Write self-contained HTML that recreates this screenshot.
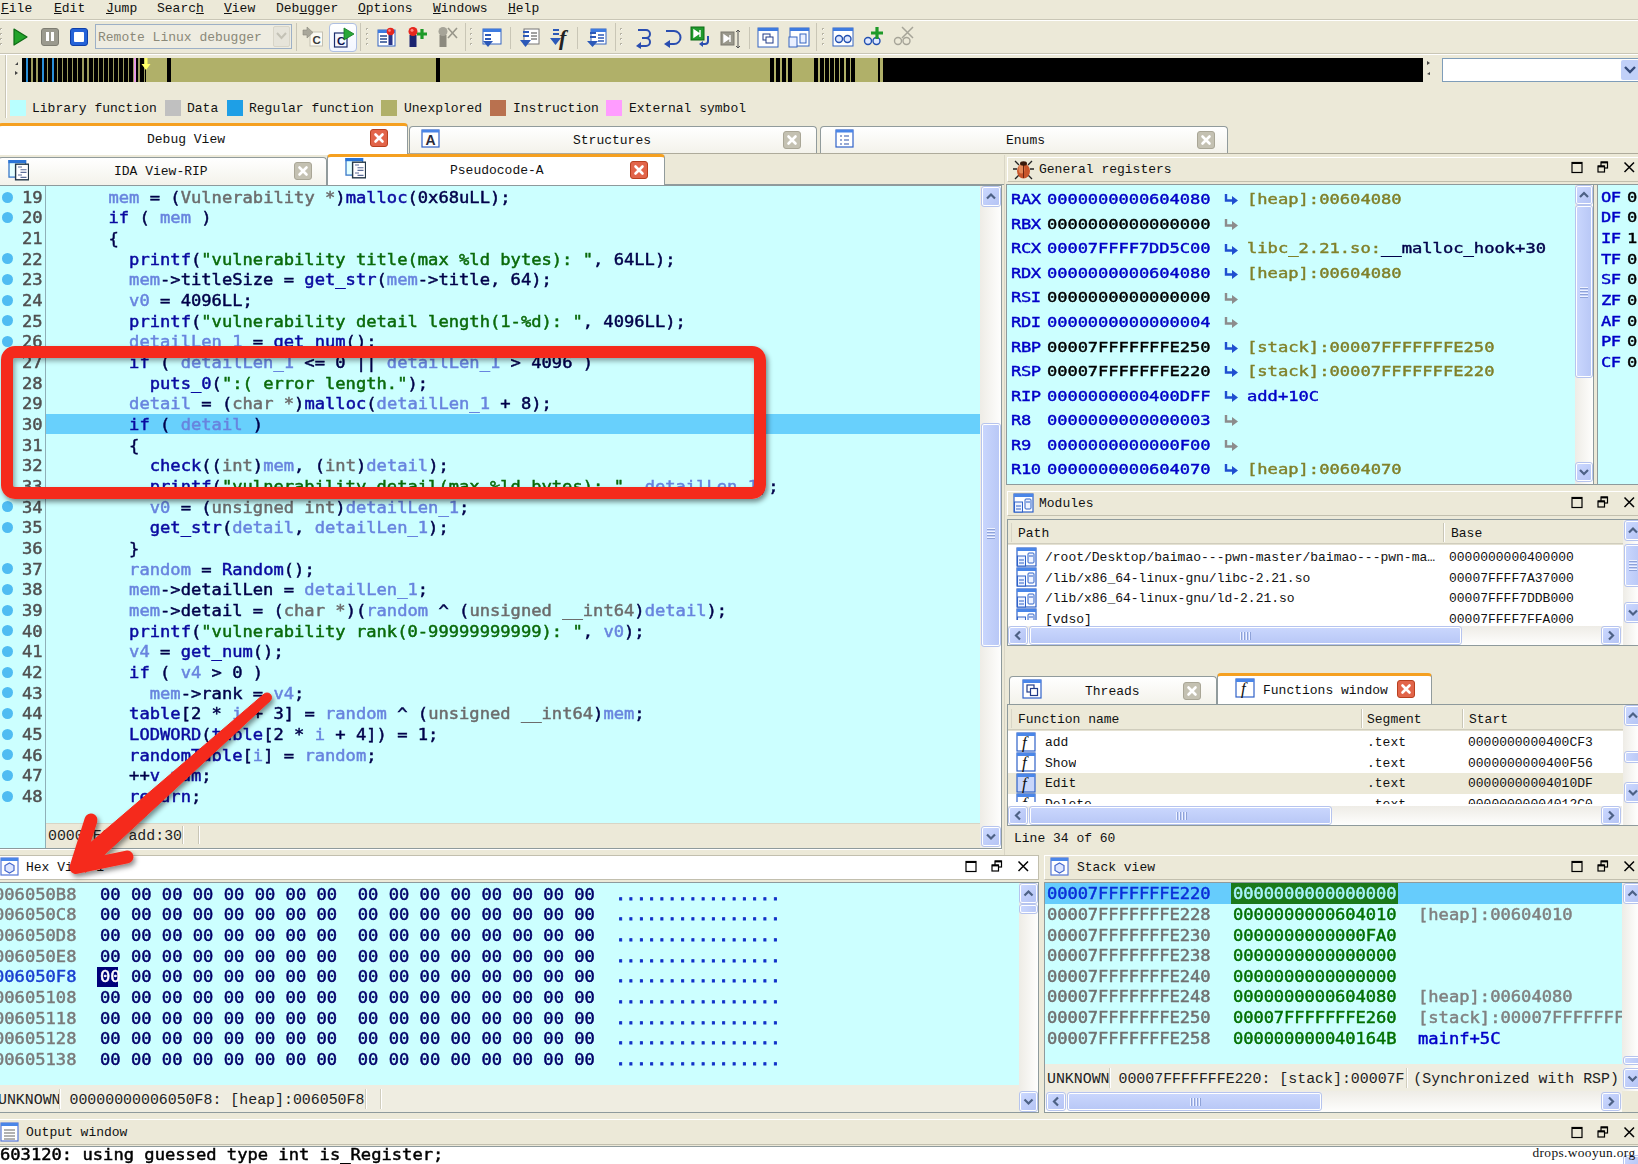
<!DOCTYPE html>
<html><head><meta charset="utf-8"><title>IDA</title>
<style>
html,body{margin:0;padding:0}
body{width:1638px;height:1164px;overflow:hidden;background:#ece9d8;position:relative;font-family:"Liberation Mono",monospace;font-size:13px;color:#000}
div,svg{position:absolute;box-sizing:border-box}
.t{white-space:pre;line-height:16px;height:16px;color:#111;margin-top:1px}
.st{white-space:pre;line-height:18px;height:18px;font-size:14.9px;color:#222;margin-top:1px}
.c{white-space:pre;font-family:"DejaVu Sans Mono","Liberation Mono",monospace;font-size:17.14px;line-height:20px;height:20px;-webkit-text-stroke:0.5px;color:#00006a;transform:scaleY(.93);transform-origin:0 50%;margin-top:-.2px}
.k{color:#0a0aa0}.v{color:#6884de}.s{color:#0a6a0a}.g{color:#6c6c6c}.n{color:#00004a}.b{color:#0000c8}.o{color:#80802a}.gr{color:#808080}.gn{color:#007000}
.tab{border:1px solid #919b9c;border-bottom:none;border-radius:4px 4px 0 0;background:linear-gradient(#fff,#f3f2ea)}
.taba{border:1px solid #919b9c;border-bottom:none;border-top:3px solid #f5a020;border-radius:4px 4px 0 0;background:#fff}
.xg{width:18px;height:18px;border-radius:3px;background:#c4c1b2;border:1px solid #a9a696}
.xr{width:18px;height:18px;border-radius:3px;background:#e2654a;border:1px solid #b8401f}
.sbv{background:linear-gradient(90deg,#f3f1ec,#fdfdfb)}
.sbh{background:linear-gradient(#f3f1ec,#fdfdfb)}
.thv{background:linear-gradient(90deg,#c9d6fd,#b9c8f6);border:1px solid #fff;border-radius:2px;outline:1px solid #b6c4ee}
.thh{background:linear-gradient(#c9d6fd,#b9c8f6);border:1px solid #fff;border-radius:2px;outline:1px solid #b6c4ee}
.ab{background:linear-gradient(135deg,#cbd8ff,#b5c4f4);border:1px solid #fff;border-radius:2px;outline:1px solid #b6c4ee}
</style></head><body>
<div class="t" style="left:1px;top:0px;"><u>F</u>ile</div>
<div class="t" style="left:54px;top:0px;"><u>E</u>dit</div>
<div class="t" style="left:106px;top:0px;"><u>J</u>ump</div>
<div class="t" style="left:157px;top:0px;">Searc<u>h</u></div>
<div class="t" style="left:224px;top:0px;"><u>V</u>iew</div>
<div class="t" style="left:276px;top:0px;">Deb<u>u</u>gger</div>
<div class="t" style="left:358px;top:0px;"><u>O</u>ptions</div>
<div class="t" style="left:433px;top:0px;"><u>W</u>indows</div>
<div class="t" style="left:508px;top:0px;"><u>H</u>elp</div>
<div style="left:0px;top:19px;width:1638px;height:1px;background:#c9c6b6;"></div>
<div style="left:0px;top:20px;width:1638px;height:1px;background:#fff;"></div>
<div style="left:0px;top:53px;width:1638px;height:1px;background:#c9c6b6;"></div>
<div style="left:0px;top:54px;width:1638px;height:1px;background:#fff;"></div>
<svg style="left:10px;top:26px" width="22" height="22" viewBox="0 0 22 22"><path d="M4 3 L17 11 L4 19 Z" fill="#22a32a" stroke="#0d6b14" stroke-width="1.2" stroke-linejoin="round"/></svg>
<div style="left:41px;top:28px;width:18px;height:18px;border-radius:3px;background:#9b9a8e;border:1px solid #7e7d72"></div><div style="left:46px;top:32px;width:3px;height:9px;background:#fff;"></div>
<div style="left:51px;top:32px;width:3px;height:9px;background:#fff;"></div>
<div style="left:70px;top:28px;width:18px;height:18px;border-radius:3px;background:#2563d8;border:1px solid #0f3fa8"></div><div style="left:74px;top:32px;width:10px;height:10px;background:#fff;border-radius:1px"></div>
<div style="left:95px;top:24px;width:197px;height:25px;border:1px solid #9db0c6;background:#eeece1"></div>
<div class="t" style="left:98px;top:29px;color:#8a8878">Remote Linux debugger</div>
<div style="left:273px;top:26px;width:17px;height:21px;background:#e6e4da;border:1px solid #d8d5c8;border-radius:2px"></div><svg style="left:275px;top:31px" width="13" height="10" viewBox="0 0 13 10"><path d="M2 2 L6.5 7 L11 2" fill="none" stroke="#c4c2b6" stroke-width="2"/></svg>
<div style="left:296px;top:23px;width:1px;height:28px;background:#c9c6b6;"></div>
<svg style="left:302px;top:26px" width="22" height="22" viewBox="0 0 22 22"><rect x="8" y="6" width="12.5" height="14" fill="#fbfaf4" stroke="#c4c1b2"/><text x="10.500" y="18" font-family="Liberation Sans" font-weight="bold" font-size="11.5" fill="#3a3a3a">C</text><path d="M1 4h4v-3l6 5.500l-6 5.500v-3h-4z" fill="#a9a79a" stroke="#8a887c" stroke-width=".6"/></svg>
<div style="left:329px;top:23px;width:28px;height:29px;border:1px solid #aebfe2;border-radius:4px;background:linear-gradient(#fff,#f2f6ff)"></div><svg style="left:333px;top:26px" width="24" height="24" viewBox="0 0 24 24"><rect x="1.500" y="7" width="12.5" height="14" fill="#f4f7ff" stroke="#1c2c6c" stroke-width="1.2"/><text x="4" y="19" font-family="Liberation Sans" font-weight="bold" font-size="11.5" fill="#0c1450">C</text><path d="M11 2 L21 8 L11 14 Z" fill="#2aa838" stroke="#127a20" stroke-width=".8"/></svg>
<div style="left:360px;top:23px;width:1px;height:28px;background:#c9c6b6;"></div>
<div style="left:0px;top:28px;width:2px;height:2px;background:#b8b5a5;"></div>
<div style="left:1px;top:29px;width:1px;height:1px;background:#fff;"></div>
<div style="left:0px;top:33px;width:2px;height:2px;background:#b8b5a5;"></div>
<div style="left:1px;top:34px;width:1px;height:1px;background:#fff;"></div>
<div style="left:0px;top:38px;width:2px;height:2px;background:#b8b5a5;"></div>
<div style="left:1px;top:39px;width:1px;height:1px;background:#fff;"></div>
<div style="left:0px;top:43px;width:2px;height:2px;background:#b8b5a5;"></div>
<div style="left:1px;top:44px;width:1px;height:1px;background:#fff;"></div>
<div style="left:366px;top:28px;width:2px;height:2px;background:#b8b5a5;"></div>
<div style="left:367px;top:29px;width:1px;height:1px;background:#fff;"></div>
<div style="left:366px;top:33px;width:2px;height:2px;background:#b8b5a5;"></div>
<div style="left:367px;top:34px;width:1px;height:1px;background:#fff;"></div>
<div style="left:366px;top:38px;width:2px;height:2px;background:#b8b5a5;"></div>
<div style="left:367px;top:39px;width:1px;height:1px;background:#fff;"></div>
<div style="left:366px;top:43px;width:2px;height:2px;background:#b8b5a5;"></div>
<div style="left:367px;top:44px;width:1px;height:1px;background:#fff;"></div>
<svg style="left:376px;top:26px" width="22" height="22" viewBox="0 0 22 22"><rect x="2" y="4" width="17" height="16" fill="#fff" stroke="#3565c0"/><rect x="2" y="4" width="17" height="3" fill="#3e7be0"/><path d="M4 10h7M4 13h7M4 16h7" stroke="#26488e" stroke-width="1.4"/><rect x="12.5" y="8" width="4" height="11" fill="#27358a"/><circle cx="14.5" cy="5.500" r="3.800" fill="#e6261e"/><circle cx="13.500" cy="4.500" r="1.300" fill="#ff8a80"/></svg>
<svg style="left:406px;top:26px" width="22" height="22" viewBox="0 0 22 22"><rect x="3.500" y="9" width="7" height="12" fill="#1c2470"/><circle cx="7" cy="5.500" r="4.500" fill="#e6261e"/><circle cx="6" cy="4.200" r="1.500" fill="#ff8a80"/><path d="M11 8h10M16 3v10" stroke="#1e9a28" stroke-width="3.2"/></svg>
<svg style="left:436px;top:26px" width="22" height="22" viewBox="0 0 22 22"><rect x="3.500" y="9" width="7" height="12" fill="#8c8a7e"/><circle cx="7" cy="5.500" r="4.500" fill="#a6a498"/><path d="M12 2l9 10M21 2l-9 10" stroke="#98968a" stroke-width="1.6"/></svg>
<div style="left:465px;top:23px;width:1px;height:28px;background:#c9c6b6;"></div>
<div style="left:470px;top:28px;width:2px;height:2px;background:#b8b5a5;"></div>
<div style="left:471px;top:29px;width:1px;height:1px;background:#fff;"></div>
<div style="left:470px;top:33px;width:2px;height:2px;background:#b8b5a5;"></div>
<div style="left:471px;top:34px;width:1px;height:1px;background:#fff;"></div>
<div style="left:470px;top:38px;width:2px;height:2px;background:#b8b5a5;"></div>
<div style="left:471px;top:39px;width:1px;height:1px;background:#fff;"></div>
<div style="left:470px;top:43px;width:2px;height:2px;background:#b8b5a5;"></div>
<div style="left:471px;top:44px;width:1px;height:1px;background:#fff;"></div>
<svg style="left:480px;top:26px" width="24" height="24" viewBox="0 0 24 24"><rect x="3" y="3" width="18" height="15" fill="#fff" stroke="#3565c0"/><rect x="3" y="3" width="18" height="3" fill="#3e7be0"/><path d="M5 9h6M5 13h6" stroke="#2c59b8" stroke-width="2.2"/><path d="M3 15h10l-5 6z" fill="#2c59b8"/></svg>
<div style="left:510px;top:27px;width:1px;height:22px;background:#c9c6b6;"></div>
<svg style="left:518px;top:26px" width="24" height="24" viewBox="0 0 24 24"><rect x="6" y="3" width="15" height="15" fill="#fff" stroke="#777"/><path d="M13 7h6M13 10h6M13 13h6" stroke="#444" stroke-width="1.2"/><path d="M5 6h6M5 10h6" stroke="#2c59b8" stroke-width="2.2"/><path d="M2 14h11l-5.5 7z" fill="#2c59b8"/></svg>
<svg style="left:548px;top:26px" width="24" height="24" viewBox="0 0 24 24"><path d="M5 4h6M5 8h6" stroke="#2c59b8" stroke-width="2.2"/><path d="M2 12h11l-5.5 7z" fill="#2c59b8"/><text x="11" y="19" font-family="Liberation Serif" font-style="italic" font-weight="bold" font-size="22" fill="#222">f</text></svg>
<div style="left:577px;top:27px;width:1px;height:22px;background:#c9c6b6;"></div>
<svg style="left:585px;top:26px" width="24" height="24" viewBox="0 0 24 24"><rect x="6" y="3" width="15" height="15" fill="#fff" stroke="#3565c0"/><rect x="6" y="3" width="15" height="3" fill="#3e7be0"/><path d="M5 7h6M5 11h6" stroke="#2c59b8" stroke-width="2.2"/><path d="M13 9h6M13 12h6M13 15h6" stroke="#2c59b8" stroke-width="1.6"/><path d="M2 15h11l-5.5 6z" fill="#2c59b8"/></svg>
<div style="left:615px;top:23px;width:1px;height:28px;background:#c9c6b6;"></div>
<div style="left:620px;top:28px;width:2px;height:2px;background:#b8b5a5;"></div>
<div style="left:621px;top:29px;width:1px;height:1px;background:#fff;"></div>
<div style="left:620px;top:33px;width:2px;height:2px;background:#b8b5a5;"></div>
<div style="left:621px;top:34px;width:1px;height:1px;background:#fff;"></div>
<div style="left:620px;top:38px;width:2px;height:2px;background:#b8b5a5;"></div>
<div style="left:621px;top:39px;width:1px;height:1px;background:#fff;"></div>
<div style="left:620px;top:43px;width:2px;height:2px;background:#b8b5a5;"></div>
<div style="left:621px;top:44px;width:1px;height:1px;background:#fff;"></div>
<svg style="left:633px;top:26px" width="22" height="24" viewBox="0 0 22 24"><path d="M5 4h8a4 4 0 0 1 0 8h-4M13 12a4 4 0 0 1 0 8h-8" fill="none" stroke="#2a4db0" stroke-width="2"/><path d="M8 16l-5 4l5 3z" fill="#2a4db0"/></svg>
<svg style="left:661px;top:26px" width="22" height="24" viewBox="0 0 22 24"><path d="M5 5h8a6 6 0 0 1 0 13h-6" fill="none" stroke="#2a4db0" stroke-width="2"/><path d="M9 14l-6 4l6 4z" fill="#2a4db0"/></svg>
<svg style="left:690px;top:26px" width="24" height="24" viewBox="0 0 24 24"><rect x="1" y="1" width="13" height="13" fill="#1f9a2c" stroke="#0d6b14"/><path d="M4 4l5 3.5l-5 3.5zM10 4v7" fill="#fff" stroke="#fff" stroke-width="1.4"/><path d="M18 10v5a3 3 0 0 1-3 3h-3" fill="none" stroke="#2a4db0" stroke-width="2"/><path d="M13 15l-4 3l4 3z" fill="#2a4db0"/></svg>
<svg style="left:720px;top:28px" width="24" height="24" viewBox="0 0 24 24"><rect x="1" y="4" width="13" height="13" fill="#9a988c" stroke="#7b796e"/><path d="M4 7l5 3.5l-5 3.5zM10 7v7" fill="#fff" stroke="#fff" stroke-width="1.4"/><path d="M18 2v18M16 4l2-2l2 2M16 18l2 2l2-2" fill="none" stroke="#555" stroke-width="1"/></svg>
<div style="left:749px;top:27px;width:1px;height:22px;background:#c9c6b6;"></div>
<svg style="left:757px;top:26px" width="24" height="24" viewBox="0 0 24 24"><rect x="1" y="2" width="20" height="19" fill="#fff" stroke="#3565c0"/><rect x="1" y="2" width="20" height="3" fill="#3e7be0"/><rect x="6" y="8" width="7" height="6" fill="#fff" stroke="#223c88"/><rect x="9" y="11" width="7" height="6" fill="#fff" stroke="#223c88"/></svg>
<svg style="left:787px;top:26px" width="24" height="24" viewBox="0 0 24 24"><rect x="3" y="2" width="19" height="18" fill="#fff" stroke="#3565c0"/><rect x="3" y="2" width="19" height="3" fill="#3e7be0"/><rect x="2" y="11" width="8" height="10" fill="#eaf0ff" stroke="#3565c0"/><rect x="13" y="8" width="6" height="9" fill="#eaf0ff" stroke="#3565c0"/></svg>
<div style="left:816px;top:23px;width:1px;height:28px;background:#c9c6b6;"></div>
<div style="left:822px;top:28px;width:2px;height:2px;background:#b8b5a5;"></div>
<div style="left:823px;top:29px;width:1px;height:1px;background:#fff;"></div>
<div style="left:822px;top:33px;width:2px;height:2px;background:#b8b5a5;"></div>
<div style="left:823px;top:34px;width:1px;height:1px;background:#fff;"></div>
<div style="left:822px;top:38px;width:2px;height:2px;background:#b8b5a5;"></div>
<div style="left:823px;top:39px;width:1px;height:1px;background:#fff;"></div>
<div style="left:822px;top:43px;width:2px;height:2px;background:#b8b5a5;"></div>
<div style="left:823px;top:44px;width:1px;height:1px;background:#fff;"></div>
<svg style="left:832px;top:26px" width="24" height="24" viewBox="0 0 24 24"><rect x="1" y="2" width="20" height="18" fill="#fff" stroke="#3565c0"/><rect x="1" y="2" width="20" height="3" fill="#3e7be0"/><circle cx="7" cy="13" r="3.5" fill="#dfe8ff" stroke="#2350b0" stroke-width="1.4"/><circle cx="15.5" cy="13" r="3.5" fill="#dfe8ff" stroke="#2350b0" stroke-width="1.4"/></svg>
<svg style="left:862px;top:26px" width="24" height="24" viewBox="0 0 24 24"><circle cx="6" cy="15" r="3.5" fill="#dfe8ff" stroke="#2350b0" stroke-width="1.4"/><circle cx="14.5" cy="15" r="3.5" fill="#dfe8ff" stroke="#2350b0" stroke-width="1.4"/><path d="M9 7h12M15 1v12" stroke="#1e9a28" stroke-width="3.2"/></svg>
<svg style="left:892px;top:26px" width="24" height="24" viewBox="0 0 24 24"><circle cx="6" cy="15" r="3.5" fill="none" stroke="#a6a498" stroke-width="1.4"/><circle cx="14.5" cy="15" r="3.5" fill="none" stroke="#a6a498" stroke-width="1.4"/><path d="M10 1l11 11M21 1l-11 11" stroke="#a6a498" stroke-width="1.5"/></svg>
<div style="left:5px;top:55px;width:1px;height:63px;background:#c9c6b6;"></div>
<div style="left:6px;top:55px;width:1px;height:63px;background:#fff;"></div>
<div style="left:22px;top:58px;width:1401px;height:24px;background:#b0b069;"></div>
<div style="left:22px;top:58px;width:124px;height:24px;background:#000;"></div>
<div style="left:31.3px;top:58px;width:1.3px;height:24px;background:#9c9c5e;"></div>
<div style="left:36.4px;top:58px;width:1.3px;height:24px;background:#9c9c5e;"></div>
<div style="left:41.5px;top:58px;width:1.3px;height:24px;background:#9c9c5e;"></div>
<div style="left:46.6px;top:58px;width:1.3px;height:24px;background:#9c9c5e;"></div>
<div style="left:51.7px;top:58px;width:1.3px;height:24px;background:#9c9c5e;"></div>
<div style="left:56.8px;top:58px;width:1.3px;height:24px;background:#9c9c5e;"></div>
<div style="left:61.9px;top:58px;width:1.3px;height:24px;background:#9c9c5e;"></div>
<div style="left:67.0px;top:58px;width:1.3px;height:24px;background:#9c9c5e;"></div>
<div style="left:72.1px;top:58px;width:1.3px;height:24px;background:#9c9c5e;"></div>
<div style="left:77.2px;top:58px;width:1.3px;height:24px;background:#9c9c5e;"></div>
<div style="left:82.3px;top:58px;width:1.3px;height:24px;background:#9c9c5e;"></div>
<div style="left:87.4px;top:58px;width:1.3px;height:24px;background:#9c9c5e;"></div>
<div style="left:92.5px;top:58px;width:1.3px;height:24px;background:#9c9c5e;"></div>
<div style="left:97.6px;top:58px;width:1.3px;height:24px;background:#9c9c5e;"></div>
<div style="left:102.7px;top:58px;width:1.3px;height:24px;background:#9c9c5e;"></div>
<div style="left:107.8px;top:58px;width:1.3px;height:24px;background:#9c9c5e;"></div>
<div style="left:112.9px;top:58px;width:1.3px;height:24px;background:#9c9c5e;"></div>
<div style="left:118.0px;top:58px;width:1.3px;height:24px;background:#9c9c5e;"></div>
<div style="left:123.1px;top:58px;width:1.3px;height:24px;background:#9c9c5e;"></div>
<div style="left:128.2px;top:58px;width:1.3px;height:24px;background:#9c9c5e;"></div>
<div style="left:133.3px;top:58px;width:1.3px;height:24px;background:#9c9c5e;"></div>
<div style="left:138.4px;top:58px;width:1.3px;height:24px;background:#9c9c5e;"></div>
<div style="left:143.5px;top:58px;width:1.3px;height:24px;background:#9c9c5e;"></div>
<div style="left:25.5px;top:58px;width:2.2px;height:24px;background:#2a8fd8;"></div>
<div style="left:41.5px;top:58px;width:2.2px;height:24px;background:#2a8fd8;"></div>
<div style="left:51.7px;top:58px;width:2.2px;height:24px;background:#2a8fd8;"></div>
<div style="left:134.3px;top:58px;width:1.8px;height:24px;background:#e79ae6;"></div>
<div style="left:167px;top:58px;width:4px;height:24px;background:#000;"></div>
<div style="left:436px;top:58px;width:4px;height:24px;background:#000;"></div>
<div style="left:770px;top:58px;width:4px;height:24px;background:#000;"></div>
<div style="left:776px;top:58px;width:4px;height:24px;background:#000;"></div>
<div style="left:782px;top:58px;width:4px;height:24px;background:#000;"></div>
<div style="left:788px;top:58px;width:4px;height:24px;background:#000;"></div>
<div style="left:814px;top:58px;width:4px;height:24px;background:#000;"></div>
<div style="left:820px;top:58px;width:4px;height:24px;background:#000;"></div>
<div style="left:825px;top:58px;width:4px;height:24px;background:#000;"></div>
<div style="left:830px;top:58px;width:4px;height:24px;background:#000;"></div>
<div style="left:835px;top:58px;width:4px;height:24px;background:#000;"></div>
<div style="left:840px;top:58px;width:4px;height:24px;background:#000;"></div>
<div style="left:846px;top:58px;width:4px;height:24px;background:#000;"></div>
<div style="left:851px;top:58px;width:4px;height:24px;background:#000;"></div>
<div style="left:878px;top:58px;width:2px;height:24px;background:#000;"></div>
<div style="left:883px;top:58px;width:540px;height:24px;background:#000;"></div>
<svg style="left:141px;top:58px" width="10" height="14" viewBox="0 0 10 14"><path d="M3.5 0h3v6h3l-4.5 6l-4.500-6h3z" fill="#ffff66"/></svg>
<svg style="left:14px;top:60px" width="6" height="22" viewBox="0 0 6 22"><path d="M1 5l3-3v3zM1 11l3 2l-3 2z" fill="#444"/></svg>
<svg style="left:1426px;top:60px" width="6" height="22" viewBox="0 0 6 22"><path d="M1 1l3 2l-3 2zM4 12l-3 2l3 1z" fill="#444"/></svg>
<div style="left:1442px;top:58px;width:200px;height:24px;border:1px solid #7f9db9;background:#fff"></div>
<div style="left:1621px;top:60px;width:18px;height:20px;background:#c1d0f8;border-radius:2px"></div><svg style="left:1622px;top:65px" width="16" height="10" viewBox="0 0 16 10"><path d="M3 2 L8 7 L13 2" fill="none" stroke="#344a7a" stroke-width="2.4"/></svg>
<div style="left:10px;top:99.5px;width:15.5px;height:16px;background:#b9ffff;"></div>
<div class="t" style="left:32px;top:100px;">Library function</div>
<div style="left:165px;top:99.5px;width:15.5px;height:16px;background:#c0c0c0;"></div>
<div class="t" style="left:187px;top:100px;">Data</div>
<div style="left:227px;top:99.5px;width:15.5px;height:16px;background:#1e9fe6;"></div>
<div class="t" style="left:249px;top:100px;">Regular function</div>
<div style="left:381px;top:99.5px;width:15.5px;height:16px;background:#b0b069;"></div>
<div class="t" style="left:404px;top:100px;">Unexplored</div>
<div style="left:490px;top:99.5px;width:15.5px;height:16px;background:#b9714f;"></div>
<div class="t" style="left:513px;top:100px;">Instruction</div>
<div style="left:606px;top:99.5px;width:15.5px;height:16px;background:#ff9cff;"></div>
<div class="t" style="left:629px;top:100px;">External symbol</div>
<div style="left:0px;top:153px;width:1638px;height:1px;background:#919b9c;"></div>
<div class="taba" style="left:-2px;top:123px;width:410px;height:32px"></div>
<div class="t" style="left:147px;top:131px;">Debug View</div>
<div class="xr" style="left:370px;top:129px"><svg style="left:0;top:0" width="16" height="16" viewBox="0 0 16 16"><path d="M4.5 4.5 L11.5 11.5 M11.5 4.5 L4.5 11.5" stroke="#fff" stroke-width="2.6" stroke-linecap="round"/></svg></div>
<div class="tab" style="left:409px;top:126px;width:408px;height:28px"></div>
<svg style="left:421px;top:129px" width="20" height="20" viewBox="0 0 20 20"><rect x="1" y="1" width="17" height="17" fill="#fff" stroke="#2f62c8" stroke-width="1.2"/><rect x="1" y="1" width="17" height="2.5" fill="#4a86e8"/><text x="4.500" y="16" font-family="Liberation Sans" font-weight="bold" font-size="14" fill="#2a2a3a">A</text></svg>
<div class="t" style="left:573px;top:132px;">Structures</div>
<div class="xg" style="left:783px;top:131px"><svg style="left:0;top:0" width="16" height="16" viewBox="0 0 16 16"><path d="M4.5 4.5 L11.5 11.5 M11.5 4.5 L4.5 11.5" stroke="#fff" stroke-width="2.6" stroke-linecap="round"/></svg></div>
<div class="tab" style="left:820px;top:126px;width:408px;height:28px"></div>
<svg style="left:835px;top:129px" width="20" height="20" viewBox="0 0 20 20"><rect x="1" y="1" width="17" height="17" fill="#fff" stroke="#2f62c8" stroke-width="1.2"/><rect x="1" y="1" width="17" height="2.5" fill="#4a86e8"/><path d="M5 7h2M9 7h5M5 11h2M9 11h5M5 15h2M9 15h5" stroke="#2f52a8" stroke-width="1.2"/></svg>
<div class="t" style="left:1006px;top:132px;">Enums</div>
<div class="xg" style="left:1197px;top:131px"><svg style="left:0;top:0" width="16" height="16" viewBox="0 0 16 16"><path d="M4.5 4.5 L11.5 11.5 M11.5 4.5 L4.5 11.5" stroke="#fff" stroke-width="2.6" stroke-linecap="round"/></svg></div>
<div style="left:408px;top:153px;width:1230px;height:1px;background:#aeab9b;"></div>
<div class="tab" style="left:-2px;top:157px;width:329px;height:29px"></div>
<svg style="left:8px;top:160px" width="21" height="22" viewBox="0 0 21 22"><rect x="1" y="0.6" width="16.5" height="16.5" fill="#e4ffff" stroke="#3a78c8" stroke-width="1.3"/><rect x="0.4" y="0" width="17.8" height="3.2" fill="#2a74d6"/><rect x="7.6" y="4.200" width="13" height="15.6" fill="#fff" stroke="#243848" stroke-width="1.4"/><path d="M10 7h4M12.5 9.800h6M12.5 12.400h6M10 15h4M12.5 17.400h6" stroke="#5a6c98" stroke-width="1.1"/></svg>
<div class="t" style="left:114px;top:163px;">IDA View-RIP</div>
<div class="xg" style="left:294px;top:162px"><svg style="left:0;top:0" width="16" height="16" viewBox="0 0 16 16"><path d="M4.5 4.5 L11.5 11.5 M11.5 4.5 L4.5 11.5" stroke="#fff" stroke-width="2.6" stroke-linecap="round"/></svg></div>
<div class="taba" style="left:327px;top:154px;width:338px;height:32px"></div>
<svg style="left:345px;top:158px" width="21" height="22" viewBox="0 0 21 22"><rect x="1" y="0.6" width="16.5" height="16.5" fill="#e4ffff" stroke="#3a78c8" stroke-width="1.3"/><rect x="0.4" y="0" width="17.8" height="3.2" fill="#2a74d6"/><rect x="7.6" y="4.200" width="13" height="15.6" fill="#fff" stroke="#243848" stroke-width="1.4"/><path d="M10 7h4M12.5 9.800h6M12.5 12.400h6M10 15h4M12.5 17.400h6" stroke="#5a6c98" stroke-width="1.1"/></svg>
<div class="t" style="left:450px;top:162px;">Pseudocode-A</div>
<div class="xr" style="left:630px;top:161px"><svg style="left:0;top:0" width="16" height="16" viewBox="0 0 16 16"><path d="M4.5 4.5 L11.5 11.5 M11.5 4.5 L4.5 11.5" stroke="#fff" stroke-width="2.6" stroke-linecap="round"/></svg></div>
<div style="left:665px;top:184px;width:340px;height:1px;background:#919b9c;"></div>
<div style="left:0px;top:186px;width:46px;height:662px;background:#ccffff;"></div>
<div style="left:46px;top:186px;width:934px;height:637px;background:#ccffff;"></div>
<div style="left:45px;top:186px;width:1px;height:662px;background:#8fb0b8;"></div>
<div style="left:0px;top:185px;width:1002px;height:1px;background:#8e9a9c;"></div>
<div style="left:46px;top:823px;width:934px;height:25px;background:#ece9d8;"></div>
<div style="left:46px;top:823px;width:934px;height:1px;background:#d8d5c6;"></div>
<div class="st" style="left:48px;top:826px;">00000E01 add:30</div>
<div style="left:182px;top:826px;width:1px;height:18px;background:#c9c6b6;"></div>
<div style="left:183px;top:826px;width:1px;height:18px;background:#fff;"></div>
<div style="left:198px;top:826px;width:1px;height:18px;background:#c9c6b6;"></div>
<div style="left:199px;top:826px;width:1px;height:18px;background:#fff;"></div>
<div style="left:0px;top:848px;width:1002px;height:1px;background:#8e9a9c;"></div>
<div style="left:0px;top:849px;width:1002px;height:1px;background:#fff;"></div>
<div style="left:980px;top:186px;width:21px;height:662px;background:#f7f6f2;background:linear-gradient(90deg,#eeece6,#fefefd)"></div>
<div style="left:1001px;top:186px;width:1px;height:663px;background:#8e9a9c;"></div>
<div class="ab" style="left:982px;top:187px;width:18px;height:19px"><svg style="left:0;top:0" width="16" height="17" viewBox="-8.0 -8.5 16 17"><path d="M-4 2 L0 -2 L4 2" fill="none" stroke="#4d6185" stroke-width="2.2"/></svg></div>
<div class="ab" style="left:982px;top:827px;width:18px;height:19px"><svg style="left:0;top:0" width="16" height="17" viewBox="-8.0 -8.5 16 17"><path d="M-4 -2 L0 2 L4 -2" fill="none" stroke="#4d6185" stroke-width="2.2"/></svg></div>
<div class="thv" style="left:982px;top:424px;width:18px;height:222px"></div>
<div style="left:987px;top:528px;width:8px;height:1px;background:#eef2ff;"></div>
<div style="left:987px;top:529px;width:8px;height:1px;background:#8ea2d8;"></div>
<div style="left:987px;top:531px;width:8px;height:1px;background:#eef2ff;"></div>
<div style="left:987px;top:532px;width:8px;height:1px;background:#8ea2d8;"></div>
<div style="left:987px;top:534px;width:8px;height:1px;background:#eef2ff;"></div>
<div style="left:987px;top:535px;width:8px;height:1px;background:#8ea2d8;"></div>
<div style="left:987px;top:537px;width:8px;height:1px;background:#eef2ff;"></div>
<div style="left:987px;top:538px;width:8px;height:1px;background:#8ea2d8;"></div>
<div style="left:46px;top:414px;width:934px;height:20px;background:#68d0fc;"></div>
<div class="c" style="left:46.6px;top:187.0px;">      <span class="v">mem</span><span class="n"> = (</span><span class="g">Vulnerability *</span><span class="n">)</span><span class="k">malloc</span><span class="n">(0x68uLL);</span></div>
<div class="c" style="left:22px;top:187.0px;color:#505050">19</div>
<div style="left:1.5px;top:191.5px;width:11px;height:11px;border-radius:50%;background:#4fbcf2"></div>
<div class="c" style="left:46.6px;top:207.66px;">      <span class="k">if</span><span class="n"> ( </span><span class="v">mem</span><span class="n"> )</span></div>
<div class="c" style="left:22px;top:207.66px;color:#505050">20</div>
<div style="left:1.5px;top:212.16px;width:11px;height:11px;border-radius:50%;background:#4fbcf2"></div>
<div class="c" style="left:46.6px;top:228.32px;">      <span class="n">{</span></div>
<div class="c" style="left:22px;top:228.32px;color:#505050">21</div>
<div class="c" style="left:46.6px;top:248.98px;">        <span class="k">printf</span><span class="n">(</span><span class="s">"vulnerability title(max %ld bytes): "</span><span class="n">, 64LL);</span></div>
<div class="c" style="left:22px;top:248.98px;color:#505050">22</div>
<div style="left:1.5px;top:253.48px;width:11px;height:11px;border-radius:50%;background:#4fbcf2"></div>
<div class="c" style="left:46.6px;top:269.64px;">        <span class="v">mem</span><span class="n">-&gt;titleSize = </span><span class="k">get_str</span><span class="n">(</span><span class="v">mem</span><span class="n">-&gt;title, 64);</span></div>
<div class="c" style="left:22px;top:269.64px;color:#505050">23</div>
<div style="left:1.5px;top:274.14px;width:11px;height:11px;border-radius:50%;background:#4fbcf2"></div>
<div class="c" style="left:46.6px;top:290.3px;">        <span class="v">v0</span><span class="n"> = 4096LL;</span></div>
<div class="c" style="left:22px;top:290.3px;color:#505050">24</div>
<div style="left:1.5px;top:294.8px;width:11px;height:11px;border-radius:50%;background:#4fbcf2"></div>
<div class="c" style="left:46.6px;top:310.96px;">        <span class="k">printf</span><span class="n">(</span><span class="s">"vulnerability detail length(1-%d): "</span><span class="n">, 4096LL);</span></div>
<div class="c" style="left:22px;top:310.96px;color:#505050">25</div>
<div style="left:1.5px;top:315.46px;width:11px;height:11px;border-radius:50%;background:#4fbcf2"></div>
<div class="c" style="left:46.6px;top:331.62px;">        <span class="v">detailLen_1</span><span class="n"> = </span><span class="k">get_num</span><span class="n">();</span></div>
<div class="c" style="left:22px;top:331.62px;color:#505050">26</div>
<div style="left:1.5px;top:336.12px;width:11px;height:11px;border-radius:50%;background:#4fbcf2"></div>
<div class="c" style="left:46.6px;top:352.28px;">        <span class="k">if</span><span class="n"> ( </span><span class="v">detailLen_1</span><span class="n"> &lt;= 0 || </span><span class="v">detailLen_1</span><span class="n"> &gt; 4096 )</span></div>
<div class="c" style="left:22px;top:352.28px;color:#505050">27</div>
<div style="left:1.5px;top:356.78px;width:11px;height:11px;border-radius:50%;background:#4fbcf2"></div>
<div class="c" style="left:46.6px;top:372.94px;">          <span class="k">puts_0</span><span class="n">(</span><span class="s">":( error length."</span><span class="n">);</span></div>
<div class="c" style="left:22px;top:372.94px;color:#505050">28</div>
<div style="left:1.5px;top:377.44px;width:11px;height:11px;border-radius:50%;background:#4fbcf2"></div>
<div class="c" style="left:46.6px;top:393.6px;">        <span class="v">detail</span><span class="n"> = (</span><span class="g">char *</span><span class="n">)</span><span class="k">malloc</span><span class="n">(</span><span class="v">detailLen_1</span><span class="n"> + 8);</span></div>
<div class="c" style="left:22px;top:393.6px;color:#505050">29</div>
<div style="left:1.5px;top:398.1px;width:11px;height:11px;border-radius:50%;background:#4fbcf2"></div>
<div class="c" style="left:46.6px;top:414.26px;">        <span class="k">if</span><span class="n"> ( </span><span class="v">detail</span><span class="n"> )</span></div>
<div class="c" style="left:22px;top:414.26px;color:#505050">30</div>
<div style="left:1.5px;top:418.76px;width:11px;height:11px;border-radius:50%;background:#4fbcf2"></div>
<div class="c" style="left:46.6px;top:434.92px;">        <span class="n">{</span></div>
<div class="c" style="left:22px;top:434.92px;color:#505050">31</div>
<div class="c" style="left:46.6px;top:455.58px;">          <span class="k">check</span><span class="n">((</span><span class="g">int</span><span class="n">)</span><span class="v">mem</span><span class="n">, (</span><span class="g">int</span><span class="n">)</span><span class="v">detail</span><span class="n">);</span></div>
<div class="c" style="left:22px;top:455.58px;color:#505050">32</div>
<div style="left:1.5px;top:460.08px;width:11px;height:11px;border-radius:50%;background:#4fbcf2"></div>
<div class="c" style="left:46.6px;top:476.24px;">          <span class="k">printf</span><span class="n">(</span><span class="s">"vulnerability detail(max %ld bytes): "</span><span class="n">, </span><span class="v">detailLen_1</span><span class="n">);</span></div>
<div class="c" style="left:22px;top:476.24px;color:#505050">33</div>
<div style="left:1.5px;top:480.74px;width:11px;height:11px;border-radius:50%;background:#4fbcf2"></div>
<div class="c" style="left:46.6px;top:496.9px;">          <span class="v">v0</span><span class="n"> = (</span><span class="g">unsigned int</span><span class="n">)</span><span class="v">detailLen_1</span><span class="n">;</span></div>
<div class="c" style="left:22px;top:496.9px;color:#505050">34</div>
<div style="left:1.5px;top:501.4px;width:11px;height:11px;border-radius:50%;background:#4fbcf2"></div>
<div class="c" style="left:46.6px;top:517.56px;">          <span class="k">get_str</span><span class="n">(</span><span class="v">detail</span><span class="n">, </span><span class="v">detailLen_1</span><span class="n">);</span></div>
<div class="c" style="left:22px;top:517.56px;color:#505050">35</div>
<div style="left:1.5px;top:522.06px;width:11px;height:11px;border-radius:50%;background:#4fbcf2"></div>
<div class="c" style="left:46.6px;top:538.22px;">        <span class="n">}</span></div>
<div class="c" style="left:22px;top:538.22px;color:#505050">36</div>
<div class="c" style="left:46.6px;top:558.88px;">        <span class="v">random</span><span class="n"> = </span><span class="k">Random</span><span class="n">();</span></div>
<div class="c" style="left:22px;top:558.88px;color:#505050">37</div>
<div style="left:1.5px;top:563.38px;width:11px;height:11px;border-radius:50%;background:#4fbcf2"></div>
<div class="c" style="left:46.6px;top:579.54px;">        <span class="v">mem</span><span class="n">-&gt;detailLen = </span><span class="v">detailLen_1</span><span class="n">;</span></div>
<div class="c" style="left:22px;top:579.54px;color:#505050">38</div>
<div style="left:1.5px;top:584.04px;width:11px;height:11px;border-radius:50%;background:#4fbcf2"></div>
<div class="c" style="left:46.6px;top:600.2px;">        <span class="v">mem</span><span class="n">-&gt;detail = (</span><span class="g">char *</span><span class="n">)(</span><span class="v">random</span><span class="n"> ^ (</span><span class="g">unsigned __int64</span><span class="n">)</span><span class="v">detail</span><span class="n">);</span></div>
<div class="c" style="left:22px;top:600.2px;color:#505050">39</div>
<div style="left:1.5px;top:604.7px;width:11px;height:11px;border-radius:50%;background:#4fbcf2"></div>
<div class="c" style="left:46.6px;top:620.86px;">        <span class="k">printf</span><span class="n">(</span><span class="s">"vulnerability rank(0-99999999999): "</span><span class="n">, </span><span class="v">v0</span><span class="n">);</span></div>
<div class="c" style="left:22px;top:620.86px;color:#505050">40</div>
<div style="left:1.5px;top:625.36px;width:11px;height:11px;border-radius:50%;background:#4fbcf2"></div>
<div class="c" style="left:46.6px;top:641.52px;">        <span class="v">v4</span><span class="n"> = </span><span class="k">get_num</span><span class="n">();</span></div>
<div class="c" style="left:22px;top:641.52px;color:#505050">41</div>
<div style="left:1.5px;top:646.02px;width:11px;height:11px;border-radius:50%;background:#4fbcf2"></div>
<div class="c" style="left:46.6px;top:662.18px;">        <span class="k">if</span><span class="n"> ( </span><span class="v">v4</span><span class="n"> &gt; 0 )</span></div>
<div class="c" style="left:22px;top:662.18px;color:#505050">42</div>
<div style="left:1.5px;top:666.68px;width:11px;height:11px;border-radius:50%;background:#4fbcf2"></div>
<div class="c" style="left:46.6px;top:682.84px;">          <span class="v">mem</span><span class="n">-&gt;rank = </span><span class="v">v4</span><span class="n">;</span></div>
<div class="c" style="left:22px;top:682.84px;color:#505050">43</div>
<div style="left:1.5px;top:687.34px;width:11px;height:11px;border-radius:50%;background:#4fbcf2"></div>
<div class="c" style="left:46.6px;top:703.5px;">        <span class="k">table</span><span class="n">[2 * </span><span class="v">i</span><span class="n"> + 3] = </span><span class="v">random</span><span class="n"> ^ (</span><span class="g">unsigned __int64</span><span class="n">)</span><span class="v">mem</span><span class="n">;</span></div>
<div class="c" style="left:22px;top:703.5px;color:#505050">44</div>
<div style="left:1.5px;top:708.0px;width:11px;height:11px;border-radius:50%;background:#4fbcf2"></div>
<div class="c" style="left:46.6px;top:724.16px;">        <span class="k">LODWORD</span><span class="n">(</span><span class="k">table</span><span class="n">[2 * </span><span class="v">i</span><span class="n"> + 4]) = 1;</span></div>
<div class="c" style="left:22px;top:724.16px;color:#505050">45</div>
<div style="left:1.5px;top:728.66px;width:11px;height:11px;border-radius:50%;background:#4fbcf2"></div>
<div class="c" style="left:46.6px;top:744.82px;">        <span class="k">randomTable</span><span class="n">[</span><span class="v">i</span><span class="n">] = </span><span class="v">random</span><span class="n">;</span></div>
<div class="c" style="left:22px;top:744.82px;color:#505050">46</div>
<div style="left:1.5px;top:749.32px;width:11px;height:11px;border-radius:50%;background:#4fbcf2"></div>
<div class="c" style="left:46.6px;top:765.48px;">        <span class="n">++</span><span class="k">v_num</span><span class="n">;</span></div>
<div class="c" style="left:22px;top:765.48px;color:#505050">47</div>
<div style="left:1.5px;top:769.98px;width:11px;height:11px;border-radius:50%;background:#4fbcf2"></div>
<div class="c" style="left:46.6px;top:786.14px;">        <span class="k">return</span><span class="n">;</span></div>
<div class="c" style="left:22px;top:786.14px;color:#505050">48</div>
<div style="left:1.5px;top:790.64px;width:11px;height:11px;border-radius:50%;background:#4fbcf2"></div>
<div style="left:1004px;top:155px;width:1px;height:700px;background:#d9d6c6;"></div>
<div style="left:1007px;top:157px;width:640px;height:25px;background:#ece9d8;border:1px solid #c2bfae;border-top-color:#fff;border-left-color:#fff"></div>
<svg style="left:1012px;top:158px" width="23" height="23" viewBox="0 0 23 23"><path d="M3 3l4 4M20 3l-4 4M1 11h4M22 11h-4M3 21l4-4M20 21l-4-4" stroke="#222" stroke-width="1.3"/><ellipse cx="11.5" cy="13" rx="6.5" ry="7.5" fill="#c8552a"/><ellipse cx="9.500" cy="11" rx="3" ry="4.500" fill="#e48a5a"/><path d="M11.5 6v14" stroke="#6a2410" stroke-width="1"/><ellipse cx="11.5" cy="5.500" rx="3.5" ry="2.200" fill="#3a1a0c"/></svg>
<div class="t" style="left:1039px;top:161px;">General registers</div>
<svg style="left:1571px;top:161px" width="66" height="13" viewBox="0 0 66 13"><rect x="1" y="1.5" width="10" height="10" fill="none" stroke="#000" stroke-width="1.2"/><rect x="1" y="1" width="10" height="2" fill="#000"/><rect x="30" y="1" width="6.5" height="6" fill="none" stroke="#000" stroke-width="1.2"/><rect x="30" y="0.6" width="6.5" height="1.8" fill="#000"/><rect x="27" y="5" width="6.5" height="6" fill="#ece9d8" stroke="#000" stroke-width="1.2"/><rect x="27" y="4.6" width="6.5" height="1.8" fill="#000"/><path d="M53.5 1.5 L63 11 M63 1.5 L53.5 11" stroke="#000" stroke-width="1.5"/></svg>
<div style="left:1006px;top:184px;width:632px;height:1px;background:#8e9a9c;"></div>
<div style="left:1007px;top:185px;width:568px;height:299px;background:#ccffff;"></div>
<div style="left:1006px;top:185px;width:1px;height:300px;background:#8e9a9c;"></div>
<div style="left:1575px;top:185px;width:18px;height:299px;background:#f7f6f2;background:linear-gradient(90deg,#eeece6,#fefefd)"></div>
<div class="ab" style="left:1576px;top:186px;width:16px;height:18px"><svg style="left:0;top:0" width="14" height="16" viewBox="-7.0 -8.0 14 16"><path d="M-4 2 L0 -2 L4 2" fill="none" stroke="#4d6185" stroke-width="2.2"/></svg></div>
<div class="ab" style="left:1576px;top:463px;width:16px;height:18px"><svg style="left:0;top:0" width="14" height="16" viewBox="-7.0 -8.0 14 16"><path d="M-4 -2 L0 2 L4 -2" fill="none" stroke="#4d6185" stroke-width="2.2"/></svg></div>
<div class="thv" style="left:1576px;top:206px;width:16px;height:171px"></div>
<div style="left:1580px;top:287px;width:8px;height:1px;background:#eef2ff;"></div>
<div style="left:1580px;top:288px;width:8px;height:1px;background:#8ea2d8;"></div>
<div style="left:1580px;top:290px;width:8px;height:1px;background:#eef2ff;"></div>
<div style="left:1580px;top:291px;width:8px;height:1px;background:#8ea2d8;"></div>
<div style="left:1580px;top:293px;width:8px;height:1px;background:#eef2ff;"></div>
<div style="left:1580px;top:294px;width:8px;height:1px;background:#8ea2d8;"></div>
<div style="left:1580px;top:296px;width:8px;height:1px;background:#eef2ff;"></div>
<div style="left:1580px;top:297px;width:8px;height:1px;background:#8ea2d8;"></div>
<div style="left:1593px;top:185px;width:1px;height:300px;background:#8e9a9c;"></div>
<div style="left:1594px;top:185px;width:3px;height:300px;background:#ece9d8;"></div>
<div style="left:1597px;top:185px;width:1px;height:300px;background:#8e9a9c;"></div>
<div style="left:1598px;top:185px;width:40px;height:299px;background:#ccffff;"></div>
<div style="left:1006px;top:484px;width:632px;height:1px;background:#8e9a9c;"></div>
<div class="c" style="left:1011px;top:189.4px;transform:scaleY(.86);color:#0000c8;letter-spacing:-0.4px">RAX</div>
<div class="c" style="left:1047px;top:189.4px;transform:scaleY(.86);color:#0000c8;letter-spacing:-0.1px">0000000000604080</div>
<svg style="left:1224px;top:193.4px" width="15" height="14" viewBox="0 0 15 14"><path d="M2 1v6.500h7" fill="none" stroke="#1f4fd0" stroke-width="2.4"/><path d="M8 3l6 4.500l-6 4.500z" fill="#1f4fd0"/></svg>
<div class="c" style="left:1247px;top:189.4px;transform:scaleY(.86)"><span class="o">[heap]:00604080</span></div>
<div class="c" style="left:1011px;top:213.95px;transform:scaleY(.86);color:#0000c8;letter-spacing:-0.4px">RBX</div>
<div class="c" style="left:1047px;top:213.95px;transform:scaleY(.86);color:#000;letter-spacing:-0.1px">0000000000000000</div>
<svg style="left:1224px;top:217.95px" width="15" height="14" viewBox="0 0 15 14"><path d="M2 1v6.500h7" fill="none" stroke="#8c8c8c" stroke-width="2.4"/><path d="M8 3l6 4.500l-6 4.500z" fill="#8c8c8c"/></svg>
<div class="c" style="left:1011px;top:238.5px;transform:scaleY(.86);color:#0000c8;letter-spacing:-0.4px">RCX</div>
<div class="c" style="left:1047px;top:238.5px;transform:scaleY(.86);color:#0000c8;letter-spacing:-0.1px">00007FFFF7DD5C00</div>
<svg style="left:1224px;top:242.5px" width="15" height="14" viewBox="0 0 15 14"><path d="M2 1v6.500h7" fill="none" stroke="#1f4fd0" stroke-width="2.4"/><path d="M8 3l6 4.500l-6 4.500z" fill="#1f4fd0"/></svg>
<div class="c" style="left:1247px;top:238.5px;transform:scaleY(.86)"><span class="o">libc_2.21.so:</span><span class="n">__malloc_hook+30</span></div>
<div class="c" style="left:1011px;top:263.05px;transform:scaleY(.86);color:#0000c8;letter-spacing:-0.4px">RDX</div>
<div class="c" style="left:1047px;top:263.05px;transform:scaleY(.86);color:#0000c8;letter-spacing:-0.1px">0000000000604080</div>
<svg style="left:1224px;top:267.05px" width="15" height="14" viewBox="0 0 15 14"><path d="M2 1v6.500h7" fill="none" stroke="#1f4fd0" stroke-width="2.4"/><path d="M8 3l6 4.500l-6 4.500z" fill="#1f4fd0"/></svg>
<div class="c" style="left:1247px;top:263.05px;transform:scaleY(.86)"><span class="o">[heap]:00604080</span></div>
<div class="c" style="left:1011px;top:287.6px;transform:scaleY(.86);color:#0000c8;letter-spacing:-0.4px">RSI</div>
<div class="c" style="left:1047px;top:287.6px;transform:scaleY(.86);color:#000;letter-spacing:-0.1px">0000000000000000</div>
<svg style="left:1224px;top:291.6px" width="15" height="14" viewBox="0 0 15 14"><path d="M2 1v6.500h7" fill="none" stroke="#8c8c8c" stroke-width="2.4"/><path d="M8 3l6 4.500l-6 4.500z" fill="#8c8c8c"/></svg>
<div class="c" style="left:1011px;top:312.15px;transform:scaleY(.86);color:#0000c8;letter-spacing:-0.4px">RDI</div>
<div class="c" style="left:1047px;top:312.15px;transform:scaleY(.86);color:#0000c8;letter-spacing:-0.1px">0000000000000004</div>
<svg style="left:1224px;top:316.15px" width="15" height="14" viewBox="0 0 15 14"><path d="M2 1v6.500h7" fill="none" stroke="#8c8c8c" stroke-width="2.4"/><path d="M8 3l6 4.500l-6 4.500z" fill="#8c8c8c"/></svg>
<div class="c" style="left:1011px;top:336.7px;transform:scaleY(.86);color:#0000c8;letter-spacing:-0.4px">RBP</div>
<div class="c" style="left:1047px;top:336.7px;transform:scaleY(.86);color:#000;letter-spacing:-0.1px">00007FFFFFFFE250</div>
<svg style="left:1224px;top:340.7px" width="15" height="14" viewBox="0 0 15 14"><path d="M2 1v6.500h7" fill="none" stroke="#1f4fd0" stroke-width="2.4"/><path d="M8 3l6 4.500l-6 4.500z" fill="#1f4fd0"/></svg>
<div class="c" style="left:1247px;top:336.7px;transform:scaleY(.86)"><span class="o">[stack]:00007FFFFFFFE250</span></div>
<div class="c" style="left:1011px;top:361.25px;transform:scaleY(.86);color:#0000c8;letter-spacing:-0.4px">RSP</div>
<div class="c" style="left:1047px;top:361.25px;transform:scaleY(.86);color:#000;letter-spacing:-0.1px">00007FFFFFFFE220</div>
<svg style="left:1224px;top:365.25px" width="15" height="14" viewBox="0 0 15 14"><path d="M2 1v6.500h7" fill="none" stroke="#1f4fd0" stroke-width="2.4"/><path d="M8 3l6 4.500l-6 4.500z" fill="#1f4fd0"/></svg>
<div class="c" style="left:1247px;top:361.25px;transform:scaleY(.86)"><span class="o">[stack]:00007FFFFFFFE220</span></div>
<div class="c" style="left:1011px;top:385.8px;transform:scaleY(.86);color:#0000c8;letter-spacing:-0.4px">RIP</div>
<div class="c" style="left:1047px;top:385.8px;transform:scaleY(.86);color:#0000c8;letter-spacing:-0.1px">0000000000400DFF</div>
<svg style="left:1224px;top:389.8px" width="15" height="14" viewBox="0 0 15 14"><path d="M2 1v6.500h7" fill="none" stroke="#1f4fd0" stroke-width="2.4"/><path d="M8 3l6 4.500l-6 4.500z" fill="#1f4fd0"/></svg>
<div class="c" style="left:1247px;top:385.8px;transform:scaleY(.86)"><span class="b">add+10C</span></div>
<div class="c" style="left:1011px;top:410.35px;transform:scaleY(.86);color:#0000c8;letter-spacing:-0.4px">R8</div>
<div class="c" style="left:1047px;top:410.35px;transform:scaleY(.86);color:#0000c8;letter-spacing:-0.1px">0000000000000003</div>
<svg style="left:1224px;top:414.35px" width="15" height="14" viewBox="0 0 15 14"><path d="M2 1v6.500h7" fill="none" stroke="#8c8c8c" stroke-width="2.4"/><path d="M8 3l6 4.500l-6 4.500z" fill="#8c8c8c"/></svg>
<div class="c" style="left:1011px;top:434.9px;transform:scaleY(.86);color:#0000c8;letter-spacing:-0.4px">R9</div>
<div class="c" style="left:1047px;top:434.9px;transform:scaleY(.86);color:#0000c8;letter-spacing:-0.1px">0000000000000F00</div>
<svg style="left:1224px;top:438.9px" width="15" height="14" viewBox="0 0 15 14"><path d="M2 1v6.500h7" fill="none" stroke="#8c8c8c" stroke-width="2.4"/><path d="M8 3l6 4.500l-6 4.500z" fill="#8c8c8c"/></svg>
<div class="c" style="left:1011px;top:459.45px;transform:scaleY(.86);color:#0000c8;letter-spacing:-0.4px">R10</div>
<div class="c" style="left:1047px;top:459.45px;transform:scaleY(.86);color:#0000c8;letter-spacing:-0.1px">0000000000604070</div>
<svg style="left:1224px;top:463.45px" width="15" height="14" viewBox="0 0 15 14"><path d="M2 1v6.500h7" fill="none" stroke="#1f4fd0" stroke-width="2.4"/><path d="M8 3l6 4.500l-6 4.500z" fill="#1f4fd0"/></svg>
<div class="c" style="left:1247px;top:459.45px;transform:scaleY(.86)"><span class="o">[heap]:00604070</span></div>
<div class="c" style="left:1601px;top:187.0px;transform:scaleY(.86);color:#0000c8;letter-spacing:-0.6px">OF</div>
<div class="c" style="left:1627px;top:187.0px;transform:scaleY(.86);color:#000">0</div>
<div class="c" style="left:1601px;top:207.63px;transform:scaleY(.86);color:#0000c8;letter-spacing:-0.6px">DF</div>
<div class="c" style="left:1627px;top:207.63px;transform:scaleY(.86);color:#000">0</div>
<div class="c" style="left:1601px;top:228.26px;transform:scaleY(.86);color:#0000c8;letter-spacing:-0.6px">IF</div>
<div class="c" style="left:1627px;top:228.26px;transform:scaleY(.86);color:#000">1</div>
<div class="c" style="left:1601px;top:248.89px;transform:scaleY(.86);color:#0000c8;letter-spacing:-0.6px">TF</div>
<div class="c" style="left:1627px;top:248.89px;transform:scaleY(.86);color:#000">0</div>
<div class="c" style="left:1601px;top:269.52px;transform:scaleY(.86);color:#0000c8;letter-spacing:-0.6px">SF</div>
<div class="c" style="left:1627px;top:269.52px;transform:scaleY(.86);color:#000">0</div>
<div class="c" style="left:1601px;top:290.15px;transform:scaleY(.86);color:#0000c8;letter-spacing:-0.6px">ZF</div>
<div class="c" style="left:1627px;top:290.15px;transform:scaleY(.86);color:#000">0</div>
<div class="c" style="left:1601px;top:310.78px;transform:scaleY(.86);color:#0000c8;letter-spacing:-0.6px">AF</div>
<div class="c" style="left:1627px;top:310.78px;transform:scaleY(.86);color:#000">0</div>
<div class="c" style="left:1601px;top:331.41px;transform:scaleY(.86);color:#0000c8;letter-spacing:-0.6px">PF</div>
<div class="c" style="left:1627px;top:331.41px;transform:scaleY(.86);color:#000">0</div>
<div class="c" style="left:1601px;top:352.04px;transform:scaleY(.86);color:#0000c8;letter-spacing:-0.6px">CF</div>
<div class="c" style="left:1627px;top:352.04px;transform:scaleY(.86);color:#000">0</div>
<div style="left:1007px;top:491px;width:640px;height:25px;background:#ece9d8;border:1px solid #c2bfae;border-top-color:#fff;border-left-color:#fff"></div>
<svg style="left:1013px;top:493px" width="21" height="20" viewBox="0 0 21 20"><rect x="1" y="1" width="19" height="18" fill="#fff" stroke="#2f62c8" stroke-width="1.2"/><rect x="1" y="1" width="19" height="3" fill="#4a86e8"/><rect x="1.500" y="9" width="8" height="10" fill="#eef3ff" stroke="#2f62c8"/><path d="M3 13h5M3 16h5" stroke="#2f62c8"/><rect x="12" y="6" width="6" height="10" rx="1" fill="#eef3ff" stroke="#2f62c8"/><path d="M13 9h4" stroke="#2f62c8"/></svg>
<div class="t" style="left:1039px;top:495px;">Modules</div>
<svg style="left:1571px;top:496px" width="66" height="13" viewBox="0 0 66 13"><rect x="1" y="1.5" width="10" height="10" fill="none" stroke="#000" stroke-width="1.2"/><rect x="1" y="1" width="10" height="2" fill="#000"/><rect x="30" y="1" width="6.5" height="6" fill="none" stroke="#000" stroke-width="1.2"/><rect x="30" y="0.6" width="6.5" height="1.8" fill="#000"/><rect x="27" y="5" width="6.5" height="6" fill="#ece9d8" stroke="#000" stroke-width="1.2"/><rect x="27" y="4.6" width="6.5" height="1.8" fill="#000"/><path d="M53.5 1.5 L63 11 M63 1.5 L53.5 11" stroke="#000" stroke-width="1.5"/></svg>
<div style="left:1007px;top:519px;width:640px;height:127px;border:1px solid #8e9a9c;background:#fff"></div>
<div style="left:1008px;top:520px;width:616px;height:24px;background:#ece9d8;"></div>
<div style="left:1008px;top:543px;width:616px;height:1px;background:#d0cdbd;"></div>
<div style="left:1008px;top:544px;width:616px;height:1px;background:#e4e1d2;"></div>
<div style="left:1443px;top:523px;width:1px;height:19px;background:#c9c6b6;"></div>
<div style="left:1444px;top:523px;width:1px;height:19px;background:#fff;"></div>
<div style="left:1011px;top:523px;width:1px;height:19px;background:#d8d5c6;"></div>
<div class="t" style="left:1018px;top:525px;">Path</div>
<div class="t" style="left:1451px;top:525px;">Base</div>
<div style="left:1016px;top:546.5px;width:22px;height:20px;overflow:hidden"><svg style="left:0;top:0" width="21" height="20" viewBox="0 0 21 20"><rect x="1" y="1" width="19" height="18" fill="#fff" stroke="#2f62c8" stroke-width="1.2"/><rect x="1" y="1" width="19" height="3" fill="#4a86e8"/><rect x="1.500" y="9" width="8" height="10" fill="#eef3ff" stroke="#2f62c8"/><path d="M3 13h5M3 16h5" stroke="#2f62c8"/><rect x="12" y="6" width="6" height="10" rx="1" fill="#eef3ff" stroke="#2f62c8"/><path d="M13 9h4" stroke="#2f62c8"/></svg></div>
<div class="t" style="left:1045px;top:549.0px;height:16px;overflow:hidden">/root/Desktop/baimao---pwn-master/baimao---pwn-ma…</div>
<div class="t" style="left:1449px;top:549.0px;height:16px;overflow:hidden">0000000000400000</div>
<div style="left:1016px;top:567.05px;width:22px;height:20px;overflow:hidden"><svg style="left:0;top:0" width="21" height="20" viewBox="0 0 21 20"><rect x="1" y="1" width="19" height="18" fill="#fff" stroke="#2f62c8" stroke-width="1.2"/><rect x="1" y="1" width="19" height="3" fill="#4a86e8"/><rect x="1.500" y="9" width="8" height="10" fill="#eef3ff" stroke="#2f62c8"/><path d="M3 13h5M3 16h5" stroke="#2f62c8"/><rect x="12" y="6" width="6" height="10" rx="1" fill="#eef3ff" stroke="#2f62c8"/><path d="M13 9h4" stroke="#2f62c8"/></svg></div>
<div class="t" style="left:1045px;top:569.55px;height:16px;overflow:hidden">/lib/x86_64-linux-gnu/libc-2.21.so</div>
<div class="t" style="left:1449px;top:569.55px;height:16px;overflow:hidden">00007FFFF7A37000</div>
<div style="left:1016px;top:587.6px;width:22px;height:20px;overflow:hidden"><svg style="left:0;top:0" width="21" height="20" viewBox="0 0 21 20"><rect x="1" y="1" width="19" height="18" fill="#fff" stroke="#2f62c8" stroke-width="1.2"/><rect x="1" y="1" width="19" height="3" fill="#4a86e8"/><rect x="1.500" y="9" width="8" height="10" fill="#eef3ff" stroke="#2f62c8"/><path d="M3 13h5M3 16h5" stroke="#2f62c8"/><rect x="12" y="6" width="6" height="10" rx="1" fill="#eef3ff" stroke="#2f62c8"/><path d="M13 9h4" stroke="#2f62c8"/></svg></div>
<div class="t" style="left:1045px;top:590.1px;height:16px;overflow:hidden">/lib/x86_64-linux-gnu/ld-2.21.so</div>
<div class="t" style="left:1449px;top:590.1px;height:16px;overflow:hidden">00007FFFF7DDB000</div>
<div style="left:1016px;top:608.15px;width:22px;height:12px;overflow:hidden"><svg style="left:0;top:0" width="21" height="20" viewBox="0 0 21 20"><rect x="1" y="1" width="19" height="18" fill="#fff" stroke="#2f62c8" stroke-width="1.2"/><rect x="1" y="1" width="19" height="3" fill="#4a86e8"/><rect x="1.500" y="9" width="8" height="10" fill="#eef3ff" stroke="#2f62c8"/><path d="M3 13h5M3 16h5" stroke="#2f62c8"/><rect x="12" y="6" width="6" height="10" rx="1" fill="#eef3ff" stroke="#2f62c8"/><path d="M13 9h4" stroke="#2f62c8"/></svg></div>
<div class="t" style="left:1045px;top:610.65px;height:14px;overflow:hidden">[vdso]</div>
<div class="t" style="left:1449px;top:610.65px;height:14px;overflow:hidden">00007FFFF7FFA000</div>
<div style="left:1008px;top:626px;width:614px;height:19px;background:#f7f6f2;background:linear-gradient(#eeece6,#fefefd)"></div>
<div class="ab" style="left:1009px;top:627px;width:18px;height:17px"><svg style="left:0;top:0" width="16" height="15" viewBox="-8.0 -7.5 16 15"><path d="M2 -4 L-2 0 L2 4" fill="none" stroke="#4d6185" stroke-width="2.2"/></svg></div>
<div class="ab" style="left:1602px;top:627px;width:18px;height:17px"><svg style="left:0;top:0" width="16" height="15" viewBox="-8.0 -7.5 16 15"><path d="M-2 -4 L2 0 L-2 4" fill="none" stroke="#4d6185" stroke-width="2.2"/></svg></div>
<div class="thh" style="left:1030px;top:627px;width:431px;height:17px"></div>
<div style="left:1240px;top:632px;width:1px;height:8px;background:#eef2ff;"></div>
<div style="left:1241px;top:632px;width:1px;height:8px;background:#8ea2d8;"></div>
<div style="left:1243px;top:632px;width:1px;height:8px;background:#eef2ff;"></div>
<div style="left:1244px;top:632px;width:1px;height:8px;background:#8ea2d8;"></div>
<div style="left:1246px;top:632px;width:1px;height:8px;background:#eef2ff;"></div>
<div style="left:1247px;top:632px;width:1px;height:8px;background:#8ea2d8;"></div>
<div style="left:1249px;top:632px;width:1px;height:8px;background:#eef2ff;"></div>
<div style="left:1250px;top:632px;width:1px;height:8px;background:#8ea2d8;"></div>
<div style="left:1623px;top:520px;width:15px;height:125px;background:#f7f6f2;background:linear-gradient(90deg,#eeece6,#fefefd)"></div>
<div class="ab" style="left:1625px;top:521px;width:16px;height:19px"><svg style="left:0;top:0" width="14" height="17" viewBox="-7.0 -8.5 14 17"><path d="M-4 2 L0 -2 L4 2" fill="none" stroke="#4d6185" stroke-width="2.2"/></svg></div>
<div class="ab" style="left:1625px;top:603px;width:16px;height:19px"><svg style="left:0;top:0" width="14" height="17" viewBox="-7.0 -8.5 14 17"><path d="M-4 -2 L0 2 L4 -2" fill="none" stroke="#4d6185" stroke-width="2.2"/></svg></div>
<div class="thv" style="left:1625px;top:545px;width:16px;height:41px"></div>
<div style="left:1629px;top:560px;width:8px;height:1px;background:#eef2ff;"></div>
<div style="left:1629px;top:561px;width:8px;height:1px;background:#8ea2d8;"></div>
<div style="left:1629px;top:563px;width:8px;height:1px;background:#eef2ff;"></div>
<div style="left:1629px;top:564px;width:8px;height:1px;background:#8ea2d8;"></div>
<div style="left:1629px;top:566px;width:8px;height:1px;background:#eef2ff;"></div>
<div style="left:1629px;top:567px;width:8px;height:1px;background:#8ea2d8;"></div>
<div style="left:1629px;top:569px;width:8px;height:1px;background:#eef2ff;"></div>
<div style="left:1629px;top:570px;width:8px;height:1px;background:#8ea2d8;"></div>
<div style="left:1007px;top:704px;width:631px;height:1px;background:#919b9c;"></div>
<div class="tab" style="left:1009px;top:676px;width:208px;height:29px"></div>
<svg style="left:1022px;top:679px" width="20" height="20" viewBox="0 0 20 20"><rect x="1" y="1" width="18" height="18" fill="#fff" stroke="#2f62c8" stroke-width="1.2"/><rect x="1" y="1" width="18" height="3" fill="#4a86e8"/><rect x="5" y="6" width="7" height="7" fill="#fff" stroke="#223c88" stroke-width="1.2"/><rect x="8.500" y="9.500" width="7" height="7" fill="#fff" stroke="#223c88" stroke-width="1.2"/></svg>
<div class="t" style="left:1085px;top:683px;">Threads</div>
<div class="xg" style="left:1183px;top:682px"><svg style="left:0;top:0" width="16" height="16" viewBox="0 0 16 16"><path d="M4.5 4.5 L11.5 11.5 M11.5 4.5 L4.5 11.5" stroke="#fff" stroke-width="2.6" stroke-linecap="round"/></svg></div>
<div class="taba" style="left:1217px;top:673px;width:215px;height:32px"></div>
<svg style="left:1235px;top:678px" width="20" height="20" viewBox="0 0 20 20"><rect x="1" y="1" width="18" height="18" fill="#fff" stroke="#2f62c8" stroke-width="1.2"/><rect x="1" y="1" width="18" height="3" fill="#4a86e8"/><text x="6" y="16" font-family="Liberation Serif" font-style="italic" font-size="17" fill="#111">f</text></svg>
<div class="t" style="left:1263px;top:682px;">Functions window</div>
<div class="xr" style="left:1397px;top:680px"><svg style="left:0;top:0" width="16" height="16" viewBox="0 0 16 16"><path d="M4.5 4.5 L11.5 11.5 M11.5 4.5 L4.5 11.5" stroke="#fff" stroke-width="2.6" stroke-linecap="round"/></svg></div>
<div style="left:1007px;top:704px;width:640px;height:122px;border:1px solid #8e9a9c;background:#fff"></div>
<div style="left:1008px;top:705px;width:616px;height:25px;background:#ece9d8;"></div>
<div style="left:1008px;top:729px;width:616px;height:1px;background:#d0cdbd;"></div>
<div style="left:1008px;top:730px;width:616px;height:1px;background:#e4e1d2;"></div>
<div style="left:1011px;top:709px;width:1px;height:19px;background:#d8d5c6;"></div>
<div style="left:1361px;top:709px;width:1px;height:19px;background:#c9c6b6;"></div>
<div style="left:1362px;top:709px;width:1px;height:19px;background:#fff;"></div>
<div style="left:1462px;top:709px;width:1px;height:19px;background:#c9c6b6;"></div>
<div style="left:1463px;top:709px;width:1px;height:19px;background:#fff;"></div>
<div class="t" style="left:1018px;top:711px;">Function name</div>
<div class="t" style="left:1367px;top:711px;">Segment</div>
<div class="t" style="left:1469px;top:711px;">Start</div>
<div style="left:1008px;top:773px;width:616px;height:21px;background:#ece9d8;"></div>
<div style="left:1016px;top:731.5px;width:22px;height:20px;overflow:hidden"><svg style="left:0;top:0" width="20" height="20" viewBox="0 0 20 20"><rect x="1" y="1" width="18" height="18" fill="#fff" stroke="#2f62c8" stroke-width="1.2"/><rect x="1" y="1" width="18" height="3" fill="#4a86e8"/><text x="6" y="16" font-family="Liberation Serif" font-style="italic" font-size="17" fill="#111">f</text></svg></div>
<div class="t" style="left:1045px;top:734.0px;height:16px;overflow:hidden">add</div>
<div class="t" style="left:1367px;top:734.0px;height:16px;overflow:hidden">.text</div>
<div class="t" style="left:1468px;top:734.0px;height:16px;overflow:hidden">0000000000400CF3</div>
<div style="left:1016px;top:752.05px;width:22px;height:20px;overflow:hidden"><svg style="left:0;top:0" width="20" height="20" viewBox="0 0 20 20"><rect x="1" y="1" width="18" height="18" fill="#fff" stroke="#2f62c8" stroke-width="1.2"/><rect x="1" y="1" width="18" height="3" fill="#4a86e8"/><text x="6" y="16" font-family="Liberation Serif" font-style="italic" font-size="17" fill="#111">f</text></svg></div>
<div class="t" style="left:1045px;top:754.55px;height:16px;overflow:hidden">Show</div>
<div class="t" style="left:1367px;top:754.55px;height:16px;overflow:hidden">.text</div>
<div class="t" style="left:1468px;top:754.55px;height:16px;overflow:hidden">0000000000400F56</div>
<div style="left:1016px;top:772.6px;width:22px;height:20px;overflow:hidden"><svg style="left:0;top:0" width="20" height="20" viewBox="0 0 20 20"><rect x="1" y="1" width="18" height="18" fill="#c8d6fa" stroke="#2f62c8" stroke-width="1.2"/><rect x="1" y="1" width="18" height="3" fill="#4a86e8"/><text x="6" y="16" font-family="Liberation Serif" font-style="italic" font-size="17" fill="#111">f</text></svg></div>
<div class="t" style="left:1045px;top:775.1px;height:16px;overflow:hidden">Edit</div>
<div class="t" style="left:1367px;top:775.1px;height:16px;overflow:hidden">.text</div>
<div class="t" style="left:1468px;top:775.1px;height:16px;overflow:hidden">00000000004010DF</div>
<div style="left:1016px;top:793.15px;width:22px;height:9px;overflow:hidden"><svg style="left:0;top:0" width="20" height="20" viewBox="0 0 20 20"><rect x="1" y="1" width="18" height="18" fill="#fff" stroke="#2f62c8" stroke-width="1.2"/><rect x="1" y="1" width="18" height="3" fill="#4a86e8"/><text x="6" y="16" font-family="Liberation Serif" font-style="italic" font-size="17" fill="#111">f</text></svg></div>
<div class="t" style="left:1045px;top:795.65px;height:7px;overflow:hidden">Delete</div>
<div class="t" style="left:1367px;top:795.65px;height:7px;overflow:hidden">.text</div>
<div class="t" style="left:1468px;top:795.65px;height:7px;overflow:hidden">00000000004012C0</div>
<div style="left:1008px;top:806px;width:614px;height:19px;background:#f7f6f2;background:linear-gradient(#eeece6,#fefefd)"></div>
<div class="ab" style="left:1009px;top:807px;width:18px;height:17px"><svg style="left:0;top:0" width="16" height="15" viewBox="-8.0 -7.5 16 15"><path d="M2 -4 L-2 0 L2 4" fill="none" stroke="#4d6185" stroke-width="2.2"/></svg></div>
<div class="ab" style="left:1602px;top:807px;width:18px;height:17px"><svg style="left:0;top:0" width="16" height="15" viewBox="-8.0 -7.5 16 15"><path d="M-2 -4 L2 0 L-2 4" fill="none" stroke="#4d6185" stroke-width="2.2"/></svg></div>
<div class="thh" style="left:1030px;top:807px;width:301px;height:17px"></div>
<div style="left:1176px;top:812px;width:1px;height:8px;background:#eef2ff;"></div>
<div style="left:1177px;top:812px;width:1px;height:8px;background:#8ea2d8;"></div>
<div style="left:1179px;top:812px;width:1px;height:8px;background:#eef2ff;"></div>
<div style="left:1180px;top:812px;width:1px;height:8px;background:#8ea2d8;"></div>
<div style="left:1182px;top:812px;width:1px;height:8px;background:#eef2ff;"></div>
<div style="left:1183px;top:812px;width:1px;height:8px;background:#8ea2d8;"></div>
<div style="left:1185px;top:812px;width:1px;height:8px;background:#eef2ff;"></div>
<div style="left:1186px;top:812px;width:1px;height:8px;background:#8ea2d8;"></div>
<div style="left:1623px;top:705px;width:15px;height:120px;background:#f7f6f2;background:linear-gradient(90deg,#eeece6,#fefefd)"></div>
<div class="ab" style="left:1625px;top:706px;width:16px;height:19px"><svg style="left:0;top:0" width="14" height="17" viewBox="-7.0 -8.5 14 17"><path d="M-4 2 L0 -2 L4 2" fill="none" stroke="#4d6185" stroke-width="2.2"/></svg></div>
<div class="ab" style="left:1625px;top:783px;width:16px;height:19px"><svg style="left:0;top:0" width="14" height="17" viewBox="-7.0 -8.5 14 17"><path d="M-4 -2 L0 2 L4 -2" fill="none" stroke="#4d6185" stroke-width="2.2"/></svg></div>
<div class="thv" style="left:1625px;top:752px;width:16px;height:10px"></div>
<div class="t" style="left:1014px;top:830px;">Line 34 of 60</div>
<div style="left:-2px;top:855px;width:1041px;height:25px;background:#fff;border:1px solid #c2bfae"></div>
<svg style="left:0px;top:857px" width="20" height="20" viewBox="0 0 20 20"><rect x="1" y="1" width="17" height="17" fill="#fff" stroke="#5577d8" stroke-width="1.2"/><rect x="1" y="1" width="17" height="3" fill="#4a86e8"/><path d="M9.500 6l4.500 2.500v5l-4.500 2.500l-4.500-2.500v-5z" fill="#dde6ff" stroke="#4466cc" stroke-width="1.2"/></svg>
<div class="t" style="left:26px;top:859px;">Hex View-1</div>
<svg style="left:965px;top:860px" width="66" height="13" viewBox="0 0 66 13"><rect x="1" y="1.5" width="10" height="10" fill="none" stroke="#000" stroke-width="1.2"/><rect x="1" y="1" width="10" height="2" fill="#000"/><rect x="30" y="1" width="6.5" height="6" fill="none" stroke="#000" stroke-width="1.2"/><rect x="30" y="0.6" width="6.5" height="1.8" fill="#000"/><rect x="27" y="5" width="6.5" height="6" fill="#fff" stroke="#000" stroke-width="1.2"/><rect x="27" y="4.6" width="6.5" height="1.8" fill="#000"/><path d="M53.5 1.5 L63 11 M63 1.5 L53.5 11" stroke="#000" stroke-width="1.5"/></svg>
<div style="left:-2px;top:882px;width:1041px;height:231px;border:1px solid #8e9a9c;background:#ece9d8"></div>
<div style="left:0px;top:883px;width:1019px;height:202px;background:#ccffff;"></div>
<div style="left:0px;top:1085px;width:1019px;height:27px;background:#efede1;"></div>
<div style="left:1019px;top:883px;width:19px;height:229px;background:#f7f6f2;background:linear-gradient(90deg,#eeece6,#fefefd)"></div>
<div class="ab" style="left:1020px;top:884px;width:17px;height:19px"><svg style="left:0;top:0" width="15" height="17" viewBox="-7.5 -8.5 15 17"><path d="M-4 2 L0 -2 L4 2" fill="none" stroke="#4d6185" stroke-width="2.2"/></svg></div>
<div class="ab" style="left:1020px;top:1092px;width:17px;height:19px"><svg style="left:0;top:0" width="15" height="17" viewBox="-7.5 -8.5 15 17"><path d="M-4 -2 L0 2 L4 -2" fill="none" stroke="#4d6185" stroke-width="2.2"/></svg></div>
<div class="thv" style="left:1020px;top:905px;width:17px;height:8px"></div>
<div class="c" style="left:-6px;top:884.0px;color:#7a7a7a">006050B8</div>
<div class="c" style="left:100px;top:884.0px;color:#00006a">00 00 00 00 00 00 00 00  00 00 00 00 00 00 00 00  <span style="color:#1030c8;-webkit-text-stroke:0.9px">................</span></div>
<div class="c" style="left:-6px;top:904.63px;color:#7a7a7a">006050C8</div>
<div class="c" style="left:100px;top:904.63px;color:#00006a">00 00 00 00 00 00 00 00  00 00 00 00 00 00 00 00  <span style="color:#1030c8;-webkit-text-stroke:0.9px">................</span></div>
<div class="c" style="left:-6px;top:925.26px;color:#7a7a7a">006050D8</div>
<div class="c" style="left:100px;top:925.26px;color:#00006a">00 00 00 00 00 00 00 00  00 00 00 00 00 00 00 00  <span style="color:#1030c8;-webkit-text-stroke:0.9px">................</span></div>
<div class="c" style="left:-6px;top:945.89px;color:#7a7a7a">006050E8</div>
<div class="c" style="left:100px;top:945.89px;color:#00006a">00 00 00 00 00 00 00 00  00 00 00 00 00 00 00 00  <span style="color:#1030c8;-webkit-text-stroke:0.9px">................</span></div>
<div class="c" style="left:-6px;top:966.52px;color:#1a3fd0">006050F8</div>
<div style="left:97px;top:966.52px;width:21px;height:20px;background:#00007a;"></div>
<div class="c" style="left:100px;top:966.52px;color:#00006a"><span style="color:#fff">00</span> 00 00 00 00 00 00 00  00 00 00 00 00 00 00 00  <span style="color:#1030c8;-webkit-text-stroke:0.9px">................</span></div>
<div class="c" style="left:-6px;top:987.15px;color:#7a7a7a">00605108</div>
<div class="c" style="left:100px;top:987.15px;color:#00006a">00 00 00 00 00 00 00 00  00 00 00 00 00 00 00 00  <span style="color:#1030c8;-webkit-text-stroke:0.9px">................</span></div>
<div class="c" style="left:-6px;top:1007.78px;color:#7a7a7a">00605118</div>
<div class="c" style="left:100px;top:1007.78px;color:#00006a">00 00 00 00 00 00 00 00  00 00 00 00 00 00 00 00  <span style="color:#1030c8;-webkit-text-stroke:0.9px">................</span></div>
<div class="c" style="left:-6px;top:1028.41px;color:#7a7a7a">00605128</div>
<div class="c" style="left:100px;top:1028.41px;color:#00006a">00 00 00 00 00 00 00 00  00 00 00 00 00 00 00 00  <span style="color:#1030c8;-webkit-text-stroke:0.9px">................</span></div>
<div class="c" style="left:-6px;top:1049.04px;color:#7a7a7a">00605138</div>
<div class="c" style="left:100px;top:1049.04px;color:#00006a">00 00 00 00 00 00 00 00  00 00 00 00 00 00 00 00  <span style="color:#1030c8;-webkit-text-stroke:0.9px">................</span></div>
<div class="st" style="left:-2px;top:1090px;">UNKNOWN 00000000006050F8: [heap]:006050F8</div>
<div style="left:59px;top:1089px;width:1px;height:20px;background:#d0cdbd;"></div>
<div style="left:60px;top:1089px;width:1px;height:20px;background:#fff;"></div>
<div style="left:365px;top:1089px;width:1px;height:20px;background:#d0cdbd;"></div>
<div style="left:366px;top:1089px;width:1px;height:20px;background:#fff;"></div>
<div style="left:380px;top:1089px;width:1px;height:20px;background:#d0cdbd;"></div>
<div style="left:381px;top:1089px;width:1px;height:20px;background:#fff;"></div>
<div style="left:1044px;top:855px;width:600px;height:25px;background:#ece9d8;border:1px solid #c2bfae;border-top-color:#fff;border-left-color:#fff"></div>
<svg style="left:1050px;top:857px" width="20" height="20" viewBox="0 0 20 20"><rect x="1" y="1" width="17" height="17" fill="#fff" stroke="#5577d8" stroke-width="1.2"/><rect x="1" y="1" width="17" height="3" fill="#4a86e8"/><path d="M9.500 6l4.500 2.500v5l-4.500 2.500l-4.500-2.500v-5z" fill="#dde6ff" stroke="#4466cc" stroke-width="1.2"/></svg>
<div class="t" style="left:1077px;top:859px;">Stack view</div>
<svg style="left:1571px;top:860px" width="66" height="13" viewBox="0 0 66 13"><rect x="1" y="1.5" width="10" height="10" fill="none" stroke="#000" stroke-width="1.2"/><rect x="1" y="1" width="10" height="2" fill="#000"/><rect x="30" y="1" width="6.5" height="6" fill="none" stroke="#000" stroke-width="1.2"/><rect x="30" y="0.6" width="6.5" height="1.8" fill="#000"/><rect x="27" y="5" width="6.5" height="6" fill="#ece9d8" stroke="#000" stroke-width="1.2"/><rect x="27" y="4.6" width="6.5" height="1.8" fill="#000"/><path d="M53.5 1.5 L63 11 M63 1.5 L53.5 11" stroke="#000" stroke-width="1.5"/></svg>
<div style="left:1044px;top:882px;width:600px;height:231px;border:1px solid #8e9a9c;background:#ece9d8"></div>
<div style="left:1045px;top:883px;width:577px;height:181px;background:#ccffff;"></div>
<div style="left:1045px;top:1064px;width:577px;height:27px;background:#efede1;"></div>
<div style="left:1045px;top:883px;width:577px;height:21px;background:#66ccfc;"></div>
<div style="left:1231px;top:883px;width:167px;height:21px;background:#1b7a1b;"></div>
<div class="c" style="left:1047px;top:883.5px;letter-spacing:-0.1px;color:#0a2fd8">00007FFFFFFFE220</div>
<div class="c" style="left:1233px;top:883.5px;letter-spacing:-0.1px;color:#a8f4ff">0000000000000000</div>
<div class="c" style="left:1047px;top:904.13px;letter-spacing:-0.1px;color:#707070">00007FFFFFFFE228</div>
<div class="c" style="left:1233px;top:904.13px;letter-spacing:-0.1px;color:#007000">0000000000604010</div>
<div class="c" style="left:1418px;top:904.13px;width:204px;overflow:hidden"><span class="gr" style="position:static">[heap]:00604010</span></div>
<div class="c" style="left:1047px;top:924.76px;letter-spacing:-0.1px;color:#707070">00007FFFFFFFE230</div>
<div class="c" style="left:1233px;top:924.76px;letter-spacing:-0.1px;color:#007000">0000000000000FA0</div>
<div class="c" style="left:1047px;top:945.39px;letter-spacing:-0.1px;color:#707070">00007FFFFFFFE238</div>
<div class="c" style="left:1233px;top:945.39px;letter-spacing:-0.1px;color:#007000">0000000000000000</div>
<div class="c" style="left:1047px;top:966.02px;letter-spacing:-0.1px;color:#707070">00007FFFFFFFE240</div>
<div class="c" style="left:1233px;top:966.02px;letter-spacing:-0.1px;color:#007000">0000000000000000</div>
<div class="c" style="left:1047px;top:986.65px;letter-spacing:-0.1px;color:#707070">00007FFFFFFFE248</div>
<div class="c" style="left:1233px;top:986.65px;letter-spacing:-0.1px;color:#007000">0000000000604080</div>
<div class="c" style="left:1418px;top:986.65px;width:204px;overflow:hidden"><span class="gr" style="position:static">[heap]:00604080</span></div>
<div class="c" style="left:1047px;top:1007.28px;letter-spacing:-0.1px;color:#707070">00007FFFFFFFE250</div>
<div class="c" style="left:1233px;top:1007.28px;letter-spacing:-0.1px;color:#007000">00007FFFFFFFE260</div>
<div class="c" style="left:1418px;top:1007.28px;width:204px;overflow:hidden"><span class="gr" style="position:static">[stack]:00007FFFFFFFE260</span></div>
<div class="c" style="left:1047px;top:1027.91px;letter-spacing:-0.1px;color:#707070">00007FFFFFFFE258</div>
<div class="c" style="left:1233px;top:1027.91px;letter-spacing:-0.1px;color:#007000">000000000040164B</div>
<div class="c" style="left:1418px;top:1027.91px;width:204px;overflow:hidden"><span class="b" style="position:static">mainf+5C</span></div>
<div class="st" style="left:1047px;top:1069px;">UNKNOWN 00007FFFFFFFE220: [stack]:00007F (Synchronized with RSP)</div>
<div style="left:1109px;top:1068px;width:1px;height:20px;background:#d0cdbd;"></div>
<div style="left:1110px;top:1068px;width:1px;height:20px;background:#fff;"></div>
<div style="left:1406px;top:1068px;width:1px;height:20px;background:#d0cdbd;"></div>
<div style="left:1407px;top:1068px;width:1px;height:20px;background:#fff;"></div>
<div style="left:1045px;top:1091px;width:577px;height:21px;background:#f7f6f2;background:linear-gradient(#eeece6,#fefefd)"></div>
<div class="ab" style="left:1047px;top:1093px;width:18px;height:17px"><svg style="left:0;top:0" width="16" height="15" viewBox="-8.0 -7.5 16 15"><path d="M2 -4 L-2 0 L2 4" fill="none" stroke="#4d6185" stroke-width="2.2"/></svg></div>
<div class="ab" style="left:1602px;top:1093px;width:18px;height:17px"><svg style="left:0;top:0" width="16" height="15" viewBox="-8.0 -7.5 16 15"><path d="M-2 -4 L2 0 L-2 4" fill="none" stroke="#4d6185" stroke-width="2.2"/></svg></div>
<div class="thh" style="left:1068px;top:1093px;width:253px;height:17px"></div>
<div style="left:1190px;top:1098px;width:1px;height:8px;background:#eef2ff;"></div>
<div style="left:1191px;top:1098px;width:1px;height:8px;background:#8ea2d8;"></div>
<div style="left:1193px;top:1098px;width:1px;height:8px;background:#eef2ff;"></div>
<div style="left:1194px;top:1098px;width:1px;height:8px;background:#8ea2d8;"></div>
<div style="left:1196px;top:1098px;width:1px;height:8px;background:#eef2ff;"></div>
<div style="left:1197px;top:1098px;width:1px;height:8px;background:#8ea2d8;"></div>
<div style="left:1199px;top:1098px;width:1px;height:8px;background:#eef2ff;"></div>
<div style="left:1200px;top:1098px;width:1px;height:8px;background:#8ea2d8;"></div>
<div style="left:1622px;top:883px;width:16px;height:208px;background:#f7f6f2;background:linear-gradient(90deg,#eeece6,#fefefd)"></div>
<div class="ab" style="left:1624px;top:884px;width:17px;height:19px"><svg style="left:0;top:0" width="15" height="17" viewBox="-7.5 -8.5 15 17"><path d="M-4 2 L0 -2 L4 2" fill="none" stroke="#4d6185" stroke-width="2.2"/></svg></div>
<div class="ab" style="left:1624px;top:1069px;width:17px;height:19px"><svg style="left:0;top:0" width="15" height="17" viewBox="-7.5 -8.5 15 17"><path d="M-4 -2 L0 2 L4 -2" fill="none" stroke="#4d6185" stroke-width="2.2"/></svg></div>
<div class="thv" style="left:1624px;top:1057px;width:17px;height:7px"></div>
<div style="left:-2px;top:1119px;width:1644px;height:26px;background:#ece9d8;border:1px solid #c2bfae;border-top-color:#fff"></div>
<svg style="left:0px;top:1122px" width="20" height="21" viewBox="0 0 20 21"><rect x="1" y="1" width="17" height="18" fill="#fff" stroke="#5577d8" stroke-width="1.2"/><rect x="1" y="1" width="17" height="3" fill="#4a86e8"/><path d="M4 8h11M4 11h11M4 14h11M4 17h11" stroke="#666" stroke-width="1.2"/></svg>
<div class="t" style="left:26px;top:1124px;">Output window</div>
<svg style="left:1571px;top:1126px" width="66" height="13" viewBox="0 0 66 13"><rect x="1" y="1.5" width="10" height="10" fill="none" stroke="#000" stroke-width="1.2"/><rect x="1" y="1" width="10" height="2" fill="#000"/><rect x="30" y="1" width="6.5" height="6" fill="none" stroke="#000" stroke-width="1.2"/><rect x="30" y="0.6" width="6.5" height="1.8" fill="#000"/><rect x="27" y="5" width="6.5" height="6" fill="#ece9d8" stroke="#000" stroke-width="1.2"/><rect x="27" y="4.6" width="6.5" height="1.8" fill="#000"/><path d="M53.5 1.5 L63 11 M63 1.5 L53.5 11" stroke="#000" stroke-width="1.5"/></svg>
<div style="left:0px;top:1146px;width:1638px;height:1px;background:#8e9a9c;"></div>
<div style="left:0px;top:1147px;width:1638px;height:17px;background:#fff;"></div>
<div class="c" style="left:0px;top:1144.5px;color:#000">603120: using guessed type int is_Register;</div>
<div class="ab" style="left:1624px;top:1156px;width:17px;height:12px"></div>
<div style="left:1532.5px;top:1143.5px;font-family:'Liberation Serif',serif;font-size:13.4px;letter-spacing:0.36px;line-height:18px;color:#111;white-space:pre">drops.wooyun.org</div>
<div style="left:1px;top:346px;width:765px;height:152.5px;border:12px solid #f52a1c;border-radius:14px;box-shadow:2px 3px 5px rgba(0,0,0,.45), inset 2px 3px 5px rgba(0,0,0,.35)"></div>
<svg style="left:0;top:0" width="1638" height="1164" viewBox="0 0 1638 1164"><defs><filter id="sh" x="-10%" y="-10%" width="130%" height="130%"><feDropShadow dx="2" dy="3" stdDeviation="2.500" flood-color="#000" flood-opacity=".45"/></filter></defs><g filter="url(#sh)" fill="#f52a1c" stroke="#f52a1c"><path d="M264.0 694.1 L72.6 858.1 L85.3 872.3 L270.0 700.9 Z" stroke-width="1" stroke-linejoin="round"/><circle cx="267.0" cy="697.5" r="4.5"/><path d="M91 820 L76.0 867.5 L127 857" fill="none" stroke-width="13" stroke-linecap="round" stroke-linejoin="round"/></g></svg>
</body></html>
